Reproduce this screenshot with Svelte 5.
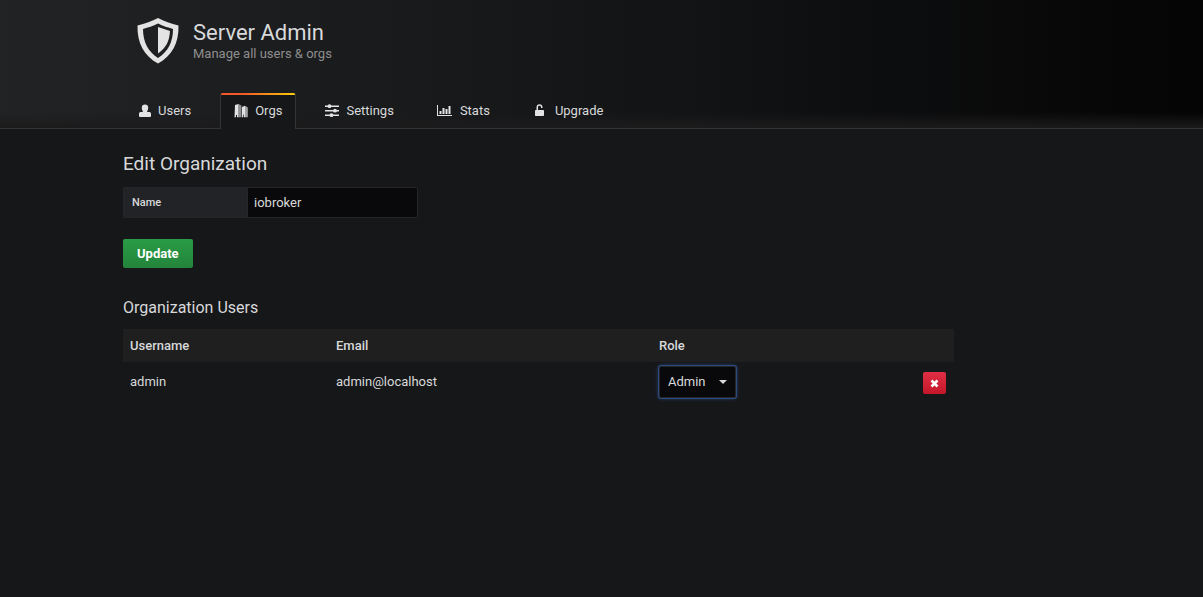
<script lang="ts">
	let orgName = $state('iobroker');
	let activeTab = $state('Orgs');

	const roles = ['Viewer', 'Editor', 'Admin'];
	const tabs = ['Users', 'Orgs', 'Settings', 'Stats', 'Upgrade'];

	let users = $state([{ login: 'admin', email: 'admin@localhost', role: 'Admin' }]);

	const removeUser = (login: string) => {
		users = users.filter((user) => user.login !== login);
	};
</script>

<header class="page-header">
	<div class="container">
		<div class="title">
			<svg class="shield" viewBox="0 0 42 46" aria-hidden="true">
				<path
					fill-rule="evenodd"
					d="M21 0C27 3 34 6 41.500 7.500C42 25 35 38 21 45.500C7 38 0 25 0.500 7.500C8 6 15 3 21 0ZM21 5.500C16 8 11 9.500 6 11C6 24 11 33.500 21 40C31 33.500 36 24 36 11C31 9.500 26 8 21 5.500Z"
				/>
				<path d="M21 9L33 13C32.500 23 29 30 21 35.500Z" />
			</svg>
			<div>
				<h1>Server Admin</h1>
				<p>Manage all users &amp; orgs</p>
			</div>
		</div>
		<nav>
			{#each tabs as tab}
				<a
					href="#{tab.toLowerCase()}"
					class:active={tab === activeTab}
					onclick={() => (activeTab = tab)}
				>
					{#if tab === 'Users'}
						<svg width="14" height="14" viewBox="0 0 14 14" aria-hidden="true">
							<path
								d="M8 0.500C10 0.500 11.200 1.500 11.200 3.500C11.200 5.200 10.800 6.400 10.200 7V8H12C13.200 8 14 8.700 14 9.700V11.800C14 12.600 13.500 13 12.800 13H3.200C2.500 13 2 12.600 2 11.800V9.700C2 8.700 2.800 8 4 8H5.800V7C5.200 6.400 4.800 5.200 4.800 3.500C4.800 1.500 6 0.500 8 0.500Z"
							/>
						</svg>
					{:else if tab === 'Orgs'}
						<svg width="14" height="14" viewBox="0 0 14 14" aria-hidden="true">
							<path d="M1 1L4.500 0V13.300H3V11H2V13.300H0.500Z" />
							<path opacity="0.6" d="M4.500 0L7.500 1.500V13.300H4.500Z" />
							<path d="M8 3L11 1.800V13.300H10V10.500H9.300V13.300H8Z" />
							<path opacity="0.7" d="M11 1.800L13.800 3.500V13.300H11Z" />
						</svg>
					{:else if tab === 'Settings'}
						<svg width="14" height="14" viewBox="0 0 14 14" aria-hidden="true">
							<path d="M0 1.500H14V3H0ZM0 6H14V7.500H0ZM0 10.500H14V12H0Z" />
							<circle cx="4.500" cy="2.200" r="1.900" />
							<circle cx="10" cy="6.700" r="1.900" />
							<circle cx="6.500" cy="11.200" r="1.900" />
						</svg>
					{:else if tab === 'Stats'}
						<svg width="16" height="14" viewBox="0 0 16 14" aria-hidden="true">
							<path
								d="M0 1H1V11H15V12H0ZM2.500 7H4.500V10H2.500ZM5.500 4H7.500V10H5.500ZM8.500 5H10.500V10H8.500ZM11.500 2H13.500V10H11.500Z"
							/>
						</svg>
					{:else}
						<svg width="15" height="14" viewBox="0 0 15 14" aria-hidden="true">
							<path
								d="M2 6H3.500V3.500C3.500 1.500 4.700 0.300 6.500 0.300C8.300 0.300 9.500 1.500 9.500 3.500V4H8V3.500C8 2.300 7.500 1.700 6.500 1.700C5.500 1.700 5 2.300 5 3.500V6H10C10.600 6 11 6.400 11 7V11C11 11.600 10.600 12 10 12H3C2.400 12 2 11.600 2 11V7C2 6.400 2.400 6 3 6Z"
							/>
						</svg>
					{/if}
					{tab}
				</a>
			{/each}
		</nav>
	</div>
</header>

<main class="container">
	<h2>Edit Organization</h2>
	<form onsubmit={(e) => e.preventDefault()}>
		<div class="field">
			<label for="org-name">Name</label>
			<input id="org-name" type="text" bind:value={orgName} />
		</div>
		<button class="update" type="submit">Update</button>
	</form>

	<h3>Organization Users</h3>
	<table>
		<thead>
			<tr>
				<th class="login">Username</th>
				<th class="email">Email</th>
				<th>Role</th>
				<th class="actions"></th>
			</tr>
		</thead>
		<tbody>
			{#each users as user}
				<tr>
					<td>{user.login}</td>
					<td>{user.email}</td>
					<td>
						<span class="select">
							<select bind:value={user.role} aria-label="Role">
								{#each roles as role}
									<option>{role}</option>
								{/each}
							</select>
						</span>
					</td>
					<td class="actions">
						<button class="remove" aria-label="Remove user" onclick={() => removeUser(user.login)}>
							<svg width="9" height="9" viewBox="0 0 9 9" aria-hidden="true">
								<path d="M1.500 1.500L7.500 7.500M7.500 1.500L1.500 7.500" stroke="#fff" stroke-width="2.600" />
							</svg>
						</button>
					</td>
				</tr>
			{/each}
		</tbody>
	</table>
</main>

<style>
	:global(body) {
		margin: 0;
		background: #161719;
		color: #d8d9da;
		font: 13px/20px Roboto, 'Liberation Sans', sans-serif;
	}

	h1, h2, h3, p {
		margin: 0;
		font-weight: 400;
	}

	svg {
		fill: #e3e3e3;
		flex: none;
	}

	.container {
		max-width: 957px;
		margin: 0 auto;
	}

	.page-header {
		background:
			linear-gradient(transparent, #1b1b1c) bottom / 100% 16px no-repeat,
			linear-gradient(90deg, #222325, #131416 55%, #040404);
		border-bottom: 1px solid #343436;
	}

	.title {
		display: flex;
		gap: 14px;
		padding: 18px 14px 29px;
	}

	.shield {
		width: 42px;
		height: 46px;
	}

	h1 {
		padding-top: 2px;
		font-size: 22px;
		line-height: 26px;
	}

	.title p {
		line-height: 16px;
		color: #8e8e8e;
	}

	nav {
		display: flex;
		gap: 15px;
	}

	nav a {
		display: flex;
		align-items: center;
		gap: 7px;
		height: 35px;
		padding: 0 13px;
		border: 1px solid transparent;
		border-width: 0 1px;
		color: #d8d9da;
		text-decoration: none;
	}

	nav a.active {
		margin-bottom: -1px;
		padding-bottom: 1px;
		border-color: #343436;
		border-radius: 2px 2px 0 0;
		background: linear-gradient(90deg, #f05a28 30%, #fbca0a 99%) top / 100% 2px no-repeat, #161719;
	}

	h2 {
		padding: 23px 0 11px;
		font-size: 19px;
		line-height: 24px;
	}

	.field {
		display: flex;
		width: 295px;
		margin-bottom: 21px;
	}

	label {
		box-sizing: border-box;
		width: 124px;
		padding: 0 8px;
		border: 1px solid #262628;
		border-right: 0;
		border-radius: 2px 0 0 2px;
		background: #212327;
		font-size: 11px;
		font-weight: 500;
		line-height: 29px;
	}

	input {
		box-sizing: border-box;
		flex: 1;
		min-width: 0;
		height: 31px;
		padding: 0 6px;
		border: 1px solid #262628;
		border-radius: 0 2px 2px 0;
		background: #09090b;
		color: inherit;
		font: inherit;
	}

	button {
		border: 0;
		border-radius: 2px;
		cursor: pointer;
	}

	.update {
		display: block;
		height: 29px;
		padding: 0 14px;
		background: linear-gradient(#299c46, #23843b);
		color: #fff;
		font: inherit;
		font-weight: 700;
	}

	h3 {
		padding: 30px 0 11px;
		font-size: 16px;
		line-height: 20px;
	}

	table {
		width: 100%;
		max-width: 831px;
		table-layout: fixed;
		border-collapse: collapse;
	}

	th {
		height: 33px;
		padding: 0 7px;
		background: #1f1f20;
		font-weight: 500;
		text-align: left;
	}

	td {
		height: 38px;
		padding: 0 7px;
	}

	.login {
		width: 192px;
	}

	.email {
		width: 309px;
	}

	.actions {
		width: 80px;
	}

	td.actions {
		padding: 2px 8px 0 0;
		text-align: right;
	}

	.select {
		display: inline-block;
		position: relative;
		vertical-align: middle;
	}

	.select::after {
		content: '';
		position: absolute;
		top: 14px;
		right: 9px;
		border: 4px solid transparent;
		border-top-color: #d8d9da;
		border-bottom: 0;
		pointer-events: none;
	}

	select {
		appearance: none;
		display: block;
		width: 77px;
		height: 32px;
		padding: 0 8px;
		border: 1px solid #262628;
		border-radius: 2px;
		outline: none;
		background: #09090b;
		box-shadow: 0 0 0 1px #2b4a80, 0 0 4px #2f5597;
		color: inherit;
		font: inherit;
	}

	.remove {
		display: inline-flex;
		align-items: center;
		justify-content: center;
		width: 23px;
		height: 22px;
		padding: 0;
		background: linear-gradient(#e02f44, #c4162a);
		vertical-align: middle;
	}
</style>
